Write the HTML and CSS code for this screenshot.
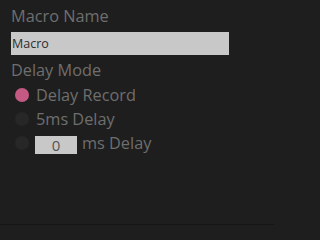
FILE: index.html
```html
<!DOCTYPE html>
<html>
<head>
<meta charset="utf-8">
<link rel="stylesheet" href="styles.css">
</head>
<body>
<div class="panel">
  <div class="label">Macro Name</div>
  <div class="name-input">Macro</div>
  <div class="label mode">Delay Mode</div>
  <div class="options">
    <div class="option"><span class="dot on"></span><span class="text">Delay Record</span></div>
    <div class="option"><span class="dot"></span><span class="text">5ms Delay</span></div>
    <div class="option"><span class="dot"></span><span class="ms-box">0</span><span class="text ms">ms Delay</span></div>
  </div>
</div>
</body>
</html>
```
FILE: styles.css
```css
html, body {
  margin: 0;
  padding: 0;
  background: #1e1e1e;
}
.panel {
  width: 274px;
  height: 225px;
  border-bottom: 1px solid #161616;
  padding: 6px 0 0 11px;
  box-sizing: border-box;
  font-family: "Open Sans", "Noto Sans", sans-serif;
  color: #6e6e6e;
}
.label {
  font-size: 16.3px;
  line-height: 20px;
}
.name-input {
  margin-top: 6px;
  width: 218px;
  height: 23px;
  background: #c8c8c8;
  color: #2e2e2e;
  font-size: 12.5px;
  line-height: 23px;
  padding-left: 1px;
  box-sizing: border-box;
}
.mode {
  margin-top: 5px;
}
.options {
  margin-top: 3px;
  display: flex;
  flex-direction: column;
}
.option {
  height: 24px;
  display: flex;
  align-items: center;
  font-size: 16.3px;
  line-height: 24px;
}
.dot {
  width: 14px;
  height: 14px;
  border-radius: 50%;
  background: #272727;
  margin-left: 4px;
  margin-right: 7px;
  flex: none;
}
.dot.on {
  background: #c45a84;
}
.ms-box {
  width: 42px;
  height: 18px;
  margin-top: 4px;
  margin-left: -1px;
  background: #c8c8c8;
  color: #555;
  font-size: 15px;
  line-height: 18px;
  text-align: center;
}
.ms {
  margin-left: 5px;
}
```
